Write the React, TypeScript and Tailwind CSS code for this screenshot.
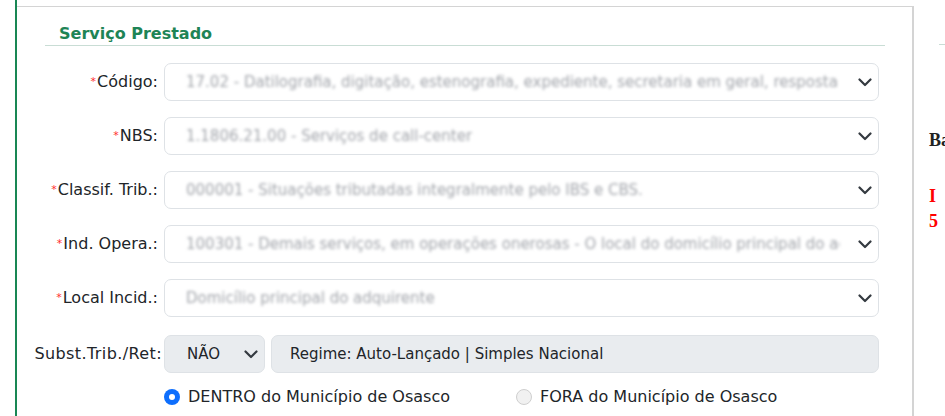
import React from 'react';

const fields = [
  {
    label: 'Código:',
    value:
      '17.02 - Datilografia, digitação, estenografia, expediente, secretaria em geral, resposta audível, redação',
  },
  { label: 'NBS:', value: '1.1806.21.00 - Serviços de call-center' },
  { label: 'Classif. Trib.:', value: '000001 - Situações tributadas integralmente pelo IBS e CBS.' },
  {
    label: 'Ind. Opera.:',
    value: '100301 - Demais serviços, em operações onerosas - O local do domicílio principal do adquirente',
  },
  { label: 'Local Incid.:', value: 'Domicílio principal do adquirente' },
];

function Chevron() {
  return (
    <svg width="14" height="10" viewBox="0 0 14 10" className="shrink-0">
      <path d="M1.5 2.5 7 8l5.5-5.5" fill="none" stroke="#343a40" strokeWidth="2.2" strokeLinecap="round" strokeLinejoin="round" />
    </svg>
  );
}

function FieldRow({ label, value }: { label: string; value: string }) {
  return (
    <div className="flex items-center h-[38px]">
      <div className="w-[147px] shrink-0 pr-[6px] flex items-center justify-end text-[16px] text-[#212529]">
        <span className="text-[11px] text-[#ff2b2b] mr-[1px]">*</span>
        {label}
      </div>
      <div className="flex-1 min-w-0 h-[38px] mr-[6px] flex items-center justify-between border border-[#dee2e6] rounded-[7px] bg-white pl-[21px] pr-[6px]">
        <span className="overflow-hidden whitespace-nowrap text-[15px] text-[#a2a5ab] blur-[1.4px] mr-[18px]">{value}</span>
        <Chevron />
      </div>
    </div>
  );
}

export default function App() {
  return (
    <div
      className="w-[945px] h-[416px] overflow-hidden bg-white flex"
      style={{ fontFamily: '"DejaVu Sans", Verdana, sans-serif' }}
    >
      <div className="w-[15px] shrink-0" />
      <div className="w-[2px] shrink-0 bg-[#198754]" />

      {/* Main card */}
      <div className="w-[897px] shrink-0 mt-[6px] border-t border-r-2 border-[#d4d4d4] pl-[28px] pr-[27px]">
        <div className="border-b border-[#c9ddd5] pl-[14px] pt-[17px] pb-[1px]">
          <h2 className="text-[16px] font-bold text-[#1e8456] leading-[20px]">Serviço Prestado</h2>
        </div>

        <div className="flex flex-col gap-[16px] pt-[17px] -ml-[28px]">
          {fields.map((f) => (
            <FieldRow key={f.label} label={f.label} value={f.value} />
          ))}

          <div className="flex items-center h-[38px] mt-[2px]">
            <div className="w-[147px] shrink-0 pr-[2px] text-right text-[16px] tracking-[0.4px] text-[#212529]">Subst.Trib./Ret:</div>
            <div className="w-[101px] shrink-0 h-[38px] flex items-center justify-between bg-[#e9ecef] border border-[#dee2e6] rounded-[7px] pl-[22px] pr-[6px] text-[15px] text-[#212529]">
              <span>NÃO</span>
              <Chevron />
            </div>
            <div className="flex-1 h-[38px] ml-[6px] mr-[6px] flex items-center bg-[#e9ecef] border border-[#dee2e6] rounded-[7px] pl-[18px] text-[15px] text-[#212529]">
              Regime: Auto-Lançado | Simples Nacional
            </div>
          </div>
        </div>

        <div className="flex items-center mt-[12px] text-[16px] text-[#212529] -ml-[28px] pl-[147px]">
          <label className="flex items-center w-[352px]">
            <span className="w-[16px] h-[16px] rounded-full bg-[#0d6efd] flex items-center justify-center mr-[8px]">
              <span className="w-[6px] h-[6px] rounded-full bg-white" />
            </span>
            DENTRO do Município de Osasco
          </label>
          <label className="flex items-center">
            <span className="w-[16px] h-[16px] rounded-full bg-[#f1f1f1] border border-[#cfcfcf] mr-[8px]" />
            FORA do Município de Osasco
          </label>
        </div>
      </div>

      {/* Right panel, cut off */}
      <div className="flex-1 pt-[44px] pl-[15px]" style={{ fontFamily: '"Liberation Serif", serif' }}>
        <div className="ml-[10px] border-b border-[#c9ddd5]" />
        <div className="mt-[86px] font-bold text-[18px] text-[#222] leading-none whitespace-nowrap">Ba</div>
        <div className="mt-[35px] font-bold text-[18px] text-[#ff0000] leading-[25px]">
          I<br />5
        </div>
      </div>
    </div>
  );
}
